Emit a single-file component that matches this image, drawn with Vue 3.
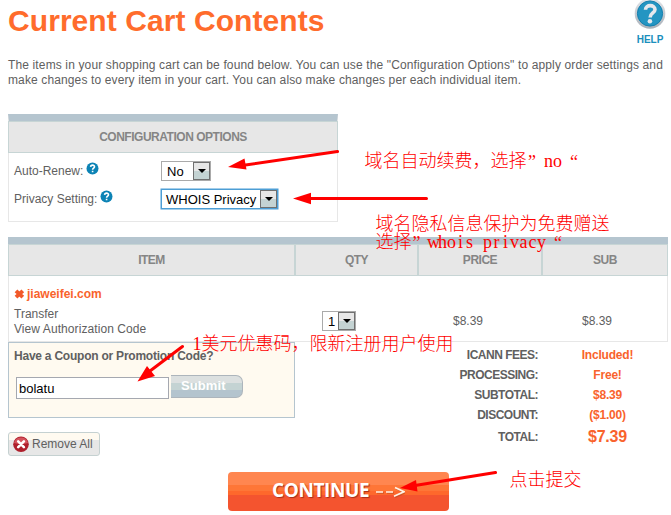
<script setup>
const columns = ['ITEM', 'QTY', 'PRICE', 'SUB']
const totals = [
  { label: 'ICANN FEES:', value: 'Included!' },
  { label: 'PROCESSING:', value: 'Free!' },
  { label: 'SUBTOTAL:', value: '$8.39' },
  { label: 'DISCOUNT:', value: '($1.00)' },
]
// Centre of every character cell in a fixed 9px grid
const cells = (text, x) => [...text].map((_, i) => x + i * 9 + 4.5).join(' ')
</script>

<template>
  <main class="page">
    <header class="top">
      <h1>Current Cart Contents</h1>
      <div class="help">
        <svg width="32" height="30" viewBox="0 0 32 30">
          <defs>
            <linearGradient id="rim" x1="0" y1="0" x2="0" y2="1">
              <stop offset="0" stop-color="#e4e6ea" />
              <stop offset="1" stop-color="#a9b0b8" />
            </linearGradient>
          </defs>
          <circle cx="16" cy="13.5" r="15.3" fill="url(#rim)" />
          <circle cx="16" cy="13.5" r="12.6" fill="#2495c2" stroke="#147fae" />
          <path d="M11.5 9.8C11.6 4.200 21 4.400 21 9.500C21 13 16.100 13 16.100 17.500" fill="none" stroke="#e6e8ed" stroke-width="3.6" />
          <circle cx="15.9" cy="21.3" r="2.3" fill="#e6e8ed" />
        </svg>
        <span>HELP</span>
      </div>
    </header>

    <p class="intro">
      <span class="line first">The items in your shopping cart can be found below. You can use the "Configuration Options" to apply order settings and</span>
      <span class="line second">make changes to every item in your cart. You can also make changes per each individual item.</span>
    </p>

    <section class="config">
      <h2 class="band">CONFIGURATION OPTIONS</h2>
      <div class="field">
        <div class="label"><span>Auto-Renew:</span>
          <svg class="tip" width="13" height="13" viewBox="0 0 13 13"><circle cx="6.5" cy="6.5" r="6" fill="#0c83b5" /><path d="M4.6 4.9C4.7 2.5 8.6 2.6 8.5 4.8C8.5 6.1 6.6 6.1 6.6 7.8M6.6 8.8V10.3" fill="none" stroke="#fff" stroke-width="1.6" /></svg>
        </div>
        <div class="select no"><span>No</span><i><b></b></i></div>
      </div>
      <div class="field">
        <div class="label"><span>Privacy Setting:</span>
          <svg class="tip" width="13" height="13" viewBox="0 0 13 13"><circle cx="6.5" cy="6.5" r="6" fill="#0c83b5" /><path d="M4.6 4.9C4.7 2.5 8.6 2.6 8.5 4.8C8.5 6.1 6.6 6.1 6.6 7.8M6.6 8.8V10.3" fill="none" stroke="#fff" stroke-width="1.6" /></svg>
        </div>
        <div class="select whois"><span>WHOIS Privacy</span><i><b></b></i></div>
      </div>
    </section>

    <section class="cart">
      <div class="heads">
        <div v-for="c in columns" :key="c" class="head">{{ c }}</div>
      </div>
      <div class="row">
        <div class="item">
          <div class="domain">
            <svg width="11" height="10" viewBox="0 0 11 10"><path d="M2 1.8L8.8 8.2M8.8 1.8L2 8.2" stroke="#f1592a" stroke-width="3.9" /></svg>
            <span>jiaweifei.com</span>
          </div>
          <div class="sub">Transfer</div>
          <div class="sub code">View Authorization Code</div>
        </div>
        <div class="cell qty"><div class="select one"><span>1</span><i><b></b></i></div></div>
        <div class="cell price">$8.39</div>
        <div class="cell amount">$8.39</div>
      </div>
    </section>

    <section class="bottom">
      <div class="left">
        <div class="coupon">
          <div class="ask">Have a Coupon or Promotion Code?</div>
          <div class="entry">
            <div class="box">bolatu</div>
            <div class="submit">Submit</div>
          </div>
        </div>
        <div class="remove">
          <svg width="16" height="17" viewBox="0 0 16 17"><circle cx="8" cy="8.3" r="7.8" fill="#ae1f2c" /><path d="M1 7A7.2 7.2 0 0 1 15 7Q8 9 1 7Z" fill="#d4525b" /><path d="M5.2 5.4L10.9 11.1M10.9 5.4L5.2 11.1" stroke="#fff" stroke-width="2.6" stroke-linecap="round" /></svg>
          <span>Remove All</span>
        </div>
      </div>
      <div class="totals">
        <div v-for="t in totals" :key="t.label" class="total">
          <span class="name">{{ t.label }}</span><span class="value">{{ t.value }}</span>
        </div>
        <div class="total grand"><span class="name">TOTAL:</span><span class="value">$7.39</span></div>
      </div>
    </section>

    <div class="continue"><span>CONTINUE</span>
      <svg width="30" height="14" viewBox="0 0 30 14"><path d="M1 7H8M11 7H18M20 2.5L29 6.8L19 11.2" fill="none" stroke="#a84a22" stroke-width="1.6" transform="translate(1 1)" opacity=".5" /><path d="M1 7H8M11 7H18M20 2.5L29 6.8L19 11.2" fill="none" stroke="#fff3e6" stroke-width="1.7" /></svg>
    </div>

    <svg class="notes" width="671" height="515" viewBox="0 0 671 515">
      <g stroke="#f00" stroke-width="3" stroke-linecap="round">
        <path d="M337.500 151.500L242 165.500M426.500 198.500H308M182.500 346.500L148 372.500M495.500 472.500L415 485.500" />
      </g>
      <g fill="#f00">
        <path d="M228 167L244.500 158.500L246.500 169.500ZM293 198.500L311 192.800V204.200ZM137.500 381.500L147 366L155 376ZM400 488L416 480L417.500 491.500Z" />
      </g>
      <g class="han">
        <text x="364.500" y="167" textLength="162">域名自动续费，选择</text>
        <text x="375.500" y="230" textLength="234">域名隐私信息保护为免费赠送</text>
        <text x="375.500" y="248" textLength="36">选择</text>
        <text x="201.500" y="349.500" textLength="252">美元优惠码，限新注册用户使用</text>
        <text x="509.500" y="485.500" textLength="72">点击提交</text>
      </g>
      <g class="latin">
        <text x="532" y="168">”</text>
        <text :x="cells('no', 544)" y="167">no</text>
        <text x="574" y="168">“</text>
        <text x="416.500" y="249">”</text>
        <text :x="cells('whois privacy', 429)" y="248">whois privacy</text>
        <text x="558" y="249">“</text>
        <text x="197" y="349.500">1</text>
      </g>
    </svg>
  </main>
</template>

<style>
body { margin: 0; background: #fff; overflow: hidden; }
</style>

<style scoped>
* { box-sizing: border-box; }
.page { position: relative; width: 671px; height: 515px; padding-left: 8px; overflow: hidden; font: 12px/15px "Liberation Sans", Arial, sans-serif; color: #606060; }
span { white-space: nowrap; }
.top { display: flex; justify-content: space-between; height: 58px; }
h1 { margin: 3px 0 0; font-size: 30px; line-height: 36px; color: #ff6c2c; white-space: nowrap; letter-spacing: .07px; }
.help { display: flex; flex-direction: column; align-items: center; width: 32px; margin-right: 5px; }
.help span { margin-top: 3px; font-size: 10px; line-height: 13px; font-weight: bold; color: #1b8fbd; }
.intro { margin: 0; height: 56px; }
.line { display: block; }
.first { letter-spacing: .135px; }
.second { letter-spacing: .125px; }
.config { width: 330px; height: 108px; border: 1px solid #e7e7e7; border-top: 7px solid #b5c5cf; }
.band { margin: 0 -1px 4px; height: 32px; border: 1px solid #c7d5d5; background: #e7e7e7; font-size: 12px; line-height: 31px; letter-spacing: -.48px; text-align: center; color: #858585; }
.field { display: flex; align-items: center; height: 28px; padding-left: 5px; }
.label { display: flex; gap: 3px; width: 147px; }
.tip { margin-top: -2px; }
.select { display: flex; justify-content: space-between; height: 20px; border: 1px solid #aaa; background: #fff; color: #000; font-size: 13px; line-height: 19px; padding-left: 5px; }
.select i { width: 17px; height: 18px; border: 1px solid #707070; background: linear-gradient(#e7e7e7 50%, #c4d3d3 50%); display: flex; align-items: center; justify-content: center; }
.select b { border: 4px solid transparent; border-top-color: #000; border-bottom: 0; }
.no { width: 50px; }
.whois { width: 117px; height: 20px; border-color: #4d9ed5; box-shadow: 0 0 0 .5px #4d9ed5; padding-left: 4px; }
.cart { margin-top: 15px; width: 660px; border-top: 7px solid #b5c5cf; }
.heads { display: grid; grid-template-columns: 287px 123px 124px 125px; height: 32px; border: 1px solid #c7d5d5; border-right: 0; background: #e7e7e7; }
.head { border-right: 2px solid #c7d5d5; font-weight: bold; line-height: 30px; letter-spacing: -.48px; text-align: center; color: #858585; }
.head:last-child { border-right-width: 1px; }
.row { display: grid; grid-template-columns: 286px 124px 124px 124px; height: 66px; border: 1px solid #e7e7e7; border-top: 0; }
.item { padding: 10px 0 0 5px; }
.domain { display: flex; align-items: center; gap: 2px; height: 16px; margin-bottom: 5px; color: #f9632c; font-weight: bold; }
.code { letter-spacing: .08px; }
.cell { padding-top: 35px; line-height: 20px; }
.qty { padding-left: 27px; }
.one { width: 34px; }
.price { padding-left: 34px; }
.amount { padding-left: 39px; }
.bottom { display: flex; height: 130px; }
.left { flex: none; width: 287px; }
.coupon { height: 76px; padding: 6px 5px; border: 1px solid #b5c5cf; background: #fffaf0; }
.ask { font-weight: bold; letter-spacing: -.23px; }
.entry { display: flex; gap: 2px; margin: 11px 0 0 2px; align-items: flex-start; }
.box { width: 153px; height: 22px; margin-top: 2px; padding-left: 2px; border: 1px solid #a5a8b0; background: #fff; color: #000; font-size: 13px; line-height: 21px; }
.submit { width: 72px; height: 23px; padding-left: 10px; border: 1px solid #adb5bc; border-left: 0; border-radius: 0 7px 7px 0; background: linear-gradient(#dce0e0 0 33%, #c4d3d3 33% 66%, #b4c4ce 66%); color: #fff; font-weight: bold; font-size: 13px; line-height: 20px; letter-spacing: .1px; }
.remove { display: flex; align-items: center; gap: 3px; width: 92px; height: 24px; margin-top: 14px; padding-left: 4px; border: 1px solid #c5d1d1; border-radius: 3px; background: linear-gradient(#fffaf0 30%, #e7e7e7 30%); }
.totals { flex: none; padding-top: 3px; }
.total { display: flex; height: 20px; font-weight: bold; line-height: 20px; }
.name { width: 243px; text-align: right; letter-spacing: -.5px; }
.value { width: 139px; text-align: center; color: #f9632c; letter-spacing: -.2px; }
.grand { height: 26px; line-height: 24px; }
.grand .value { font-size: 16px; }
.continue { display: flex; align-items: center; width: 221px; height: 39px; margin-left: 220px; padding-left: 44px; gap: 6px; border-radius: 4px; background: linear-gradient(#ff8650 0 33%, #fe7637 33% 48%, #fe682c 48% 59%, #f4542f 59%); }
.continue span { position: relative; top: -2px; font: bold 19px/36px "Open Sans", sans-serif; color: #fff; text-shadow: 1px 1px 1px #a82e1a; letter-spacing: -.4px; }
.notes { position: absolute; left: 0; top: 0; }
.han { fill: #f00; font: 300 18px "Noto Sans CJK SC", sans-serif; }
.latin { fill: #f00; font: 18px "Liberation Serif", serif; text-anchor: middle; }
</style>
